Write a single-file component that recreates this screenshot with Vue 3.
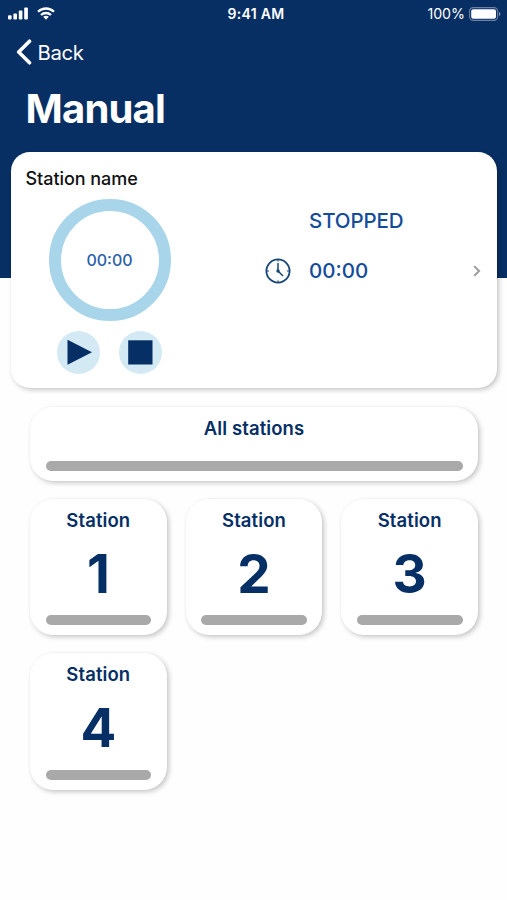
<template>
  <div class="screen">
    <header class="header">
      <div class="status-bar">
        <div class="status-left">
          <svg width="20" height="13" viewBox="0 0 20 13" fill="#fff">
            <rect x="0" y="8.3" width="3.6" height="4.2" rx="1" />
            <rect x="5.4" y="6.4" width="3.6" height="6.1" rx="1" />
            <rect x="10.8" y="3.6" width="3.6" height="8.9" rx="1" />
            <rect x="16.2" y="0.4" width="3.7" height="12.1" rx="1" />
          </svg>
          <svg width="18" height="13" viewBox="0 0 18 13" fill="none" stroke="#fff" stroke-width="2.3">
            <path d="M1 4.8C5.5 0.4 12.5 0.4 17 4.8" />
            <path d="M4 8C6.8 5.3 11.2 5.3 14 8" />
            <path d="M6.2 9.8Q9 7.6 11.8 9.8L9 12.7Z" fill="#fff" stroke="none" />
          </svg>
        </div>
        <span class="clock">9:41 AM</span>
        <div class="status-right">
          <span>100%</span>
          <svg width="32" height="14" viewBox="0 0 32 14">
            <rect x="0.6" y="0.6" width="28" height="12.8" rx="3.6" fill="none" stroke="#6c82a2" stroke-width="1.1" />
            <rect x="2.2" y="2.2" width="24.8" height="9.6" rx="2" fill="#fff" />
            <path d="M30 5v4q1.4-.6 1.4-2T30 5z" fill="#8497b1" />
          </svg>
        </div>
      </div>
      <div class="back">
        <svg width="16" height="26" viewBox="0 0 16 26" fill="none" stroke="#fff" stroke-width="3.6" stroke-linecap="round" stroke-linejoin="round">
          <path d="M13.5 2.2L2.7 13L13.5 23.8" />
        </svg>
        <span>Back</span>
      </div>
      <h1 class="title">Manual</h1>
    </header>

    <section class="current card">
      <div class="timer">
        <div class="station-name">Station name</div>
        <div class="ring">{{ remaining }}</div>
        <div class="controls">
          <button class="control">
            <svg width="43" height="43" viewBox="0 0 43 43"><path d="M10.5 8.8L35 21.2L10.5 33.7Z" /></svg>
          </button>
          <button class="control">
            <svg width="43" height="43" viewBox="0 0 43 43"><rect x="9.2" y="9.3" width="24.3" height="24.2" /></svg>
          </button>
        </div>
      </div>
      <div class="info">
        <div class="state">STOPPED</div>
        <div class="duration">
          <svg class="clock-icon" width="26" height="26" viewBox="0 0 26 26" fill="none" stroke="#174579" stroke-width="1.8">
            <circle cx="13" cy="13" r="11.6" />
            <path d="M13 5V13L18 18" stroke-width="1.5" />
            <path d="M13 1.5v2.2M13 22.3v2.2M1.5 13h2.6M21.9 13h2.6" stroke-width="1" />
            <circle cx="13" cy="13" r="1.7" fill="#174579" stroke="none" />
          </svg>
          <span>{{ duration }}</span>
          <svg class="chevron" width="8" height="12" viewBox="0 0 8 12" fill="none" stroke="#999" stroke-width="1.9">
            <path d="M1.2 1.1L6.1 6L1.2 10.9" />
          </svg>
        </div>
      </div>
    </section>

    <main class="stations">
      <div class="station card all">
        <span class="label">All stations</span>
        <div class="bar"></div>
      </div>
      <div v-for="n in stations" :key="n" class="station card">
        <span class="label">Station</span>
        <span class="number">{{ n }}</span>
        <div class="bar"></div>
      </div>
    </main>
  </div>
</template>

<script setup>
import { ref } from 'vue'

const stations = [1, 2, 3, 4]
const remaining = ref('00:00')
const duration = ref('00:00')
</script>

<style>
body {
  margin: 0;
  background: #fefefe;
}
</style>

<style scoped>
.screen {
  height: 900px;
  overflow: hidden;
  background: #fefefe;
  font-family: Inter, "Liberation Sans", sans-serif;
  color: #062f66;
}

.header {
  height: 278px;
  background: #082f64;
  color: #fff;
}

.status-bar {
  display: grid;
  grid-template-columns: 1fr auto 1fr;
  align-items: center;
  height: 27px;
  padding: 0 6px 0 8px;
  font-size: 13.5px;
}

.status-left {
  display: flex;
  align-items: center;
  gap: 9px;
}

.clock {
  margin-left: 3px;
  font-weight: 600;
  font-size: 14px;
  letter-spacing: 0.3px;
}

.status-right {
  display: flex;
  align-items: center;
  justify-content: flex-end;
  gap: 4px;
  font-size: 14.2px;
}

.back {
  display: flex;
  align-items: center;
  gap: 5.5px;
  height: 50px;
  padding-left: 16px;
  font-size: 20.3px;
  letter-spacing: -0.35px;
}

.title {
  margin: 7px 0 0 25.5px;
  font-size: 40px;
  line-height: 50px;
  font-weight: 700;
  letter-spacing: -0.8px;
}

.card {
  background: #fff;
  box-shadow: 2px 2px 5px rgba(0, 0, 0, 0.22), 0 0 2px rgba(0, 0, 0, 0.03);
}

.current {
  display: flex;
  height: 236px;
  margin: -126px 10px 0 11px;
  border-radius: 19px;
}

.timer {
  width: 197px;
  display: flex;
  flex-direction: column;
  align-items: center;
}

.station-name {
  align-self: flex-start;
  margin: 15px 0 0 14.5px;
  color: #111;
  font-size: 18px;
  line-height: 24px;
  font-weight: 500;
  letter-spacing: -0.05px;
  white-space: nowrap;
}

.ring {
  box-sizing: border-box;
  display: flex;
  align-items: center;
  justify-content: center;
  width: 122px;
  height: 122px;
  margin-top: 8px;
  border: 12px solid #a8d5e9;
  border-radius: 50%;
  color: #2861a9;
  font-size: 16px;
  font-weight: 500;
}

.controls {
  display: flex;
  gap: 19px;
  margin-top: 10px;
}

.control {
  width: 43px;
  height: 43px;
  padding: 0;
  border: 0;
  border-radius: 50%;
  background: #d3e9f4;
  fill: #062f66;
}

.control svg { display: block; }

.info {
  flex: 1;
  color: #144b9b;
  font-size: 20.5px;
  line-height: 26px;
  font-weight: 500;
}

.state {
  margin: 56px 0 0 101px;
  letter-spacing: -0.1px;
}

.duration {
  display: flex;
  align-items: center;
  margin: 24px 16px 0 57px;
}

.clock-icon { margin-right: 18px; }

.chevron { margin-left: auto; }

.stations {
  display: grid;
  grid-template-columns: repeat(3, 1fr);
  gap: 18px 19px;
  margin: 19px 29px 0 30px;
}

.station {
  box-sizing: border-box;
  display: flex;
  flex-direction: column;
  align-items: center;
  height: 136.5px;
  padding: 9px 15.5px 10px;
  border-radius: 23px;
}

.all {
  grid-column: 1 / -1;
  height: 73.5px;
}

.label {
  font-size: 18.5px;
  line-height: 24px;
  font-weight: 600;
  letter-spacing: 0.1px;
}

.number {
  margin-top: 12px;
  font-size: 53px;
  line-height: 60px;
  font-weight: 700;
}

.bar {
  width: 100%;
  height: 10px;
  margin-top: auto;
  border-radius: 5px;
  background: #a9a9a9;
}
</style>
